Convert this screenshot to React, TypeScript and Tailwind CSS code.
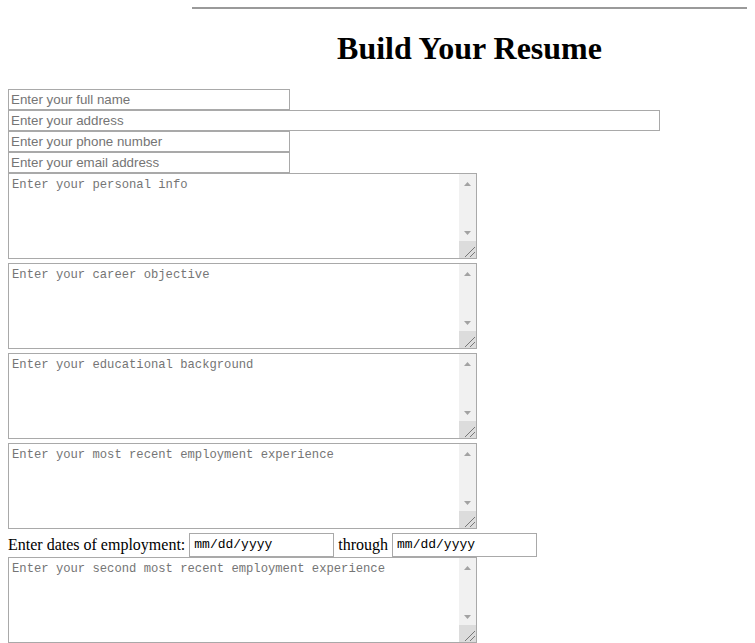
import * as React from "react";

const Field = ({ ph, w }: { ph: string; w: string }) => (
  <input
    type="text"
    placeholder={ph}
    className={`${w} block h-[21px] border border-[#a9a9a9] bg-white px-[2px] text-[13.33px] leading-[15px] outline-none font-['Liberation_Sans',Arial,sans-serif] placeholder:text-[#757575]`}
  />
);

const Area = ({ ph, last }: { ph: string; last?: boolean }) => (
  <div className={`relative w-[469px] h-[86px] border border-[#a9a9a9] bg-white ${last ? "" : "mb-[4px]"}`}>
    <textarea
      placeholder={ph}
      className="block w-full h-full resize-none overflow-hidden outline-none pl-[3px] pt-[4px] pr-[20px] text-[12.2px] leading-[15px] font-['Liberation_Mono',monospace] placeholder:text-[#757575]"
    />
    {/* fake scrollbar */}
    <div className="absolute right-0 top-0 bottom-0 w-[17px] bg-[#f1f1f1] flex flex-col">
      <div className="h-[17px] flex items-center justify-center pt-[3px]">
        <svg width="7" height="4" viewBox="0 0 7 4"><path d="M3.5 0L7 4H0z" fill="#a3a3a3" /></svg>
      </div>
      <div className="flex-1" />
      <div className="h-[17px] flex items-center justify-center">
        <svg width="7" height="4" viewBox="0 0 7 4"><path d="M0 0h7L3.5 4z" fill="#a3a3a3" /></svg>
      </div>
      <div className="h-[17px] bg-[#dcdcdc] relative">
        <svg width="17" height="17" viewBox="0 0 17 17" className="absolute inset-0">
          <path d="M6 16L16 6M11 16L16 11" stroke="#777" strokeWidth="1" />
        </svg>
      </div>
    </div>
  </div>
);

const DateBox = () => (
  <div className="w-[145px] h-[24px] border border-[#a9a9a9] bg-white flex items-center pl-[4px] text-[13px] font-['Liberation_Mono',monospace] text-black">
    mm/dd/yyyy
  </div>
);

export default function App() {
  return (
    <div className="w-[755px] h-[643px] overflow-hidden bg-white px-[8px] font-['Liberation_Serif','Times_New_Roman',serif] text-black">
      <hr className="ml-auto w-[555px] mt-[7px] border-0 border-t-2 border-[#9a9a9a]" />
      <div className="pl-[184px]">
        <h1 className="text-center text-[32px] font-bold leading-[37px] mt-[21px] mb-[22px]">Build Your Resume</h1>
      </div>
      <form className="flex flex-col">
        <Field ph="Enter your full name" w="w-[282px]" />
        <Field ph="Enter your address" w="w-[652px]" />
        <Field ph="Enter your phone number" w="w-[282px]" />
        <Field ph="Enter your email address" w="w-[282px]" />
        <Area ph="Enter your personal info" />
        <Area ph="Enter your career objective" />
        <Area ph="Enter your educational background" />
        <Area ph="Enter your most recent employment experience" last />
        <div className="h-[28px] flex items-center pt-[4px] text-[16px] gap-[4px]">
          <span>Enter dates of employment:</span>
          <DateBox />
          <span>through</span>
          <DateBox />
        </div>
        <Area ph="Enter your second most recent employment experience" last />
      </form>
    </div>
  );
}
